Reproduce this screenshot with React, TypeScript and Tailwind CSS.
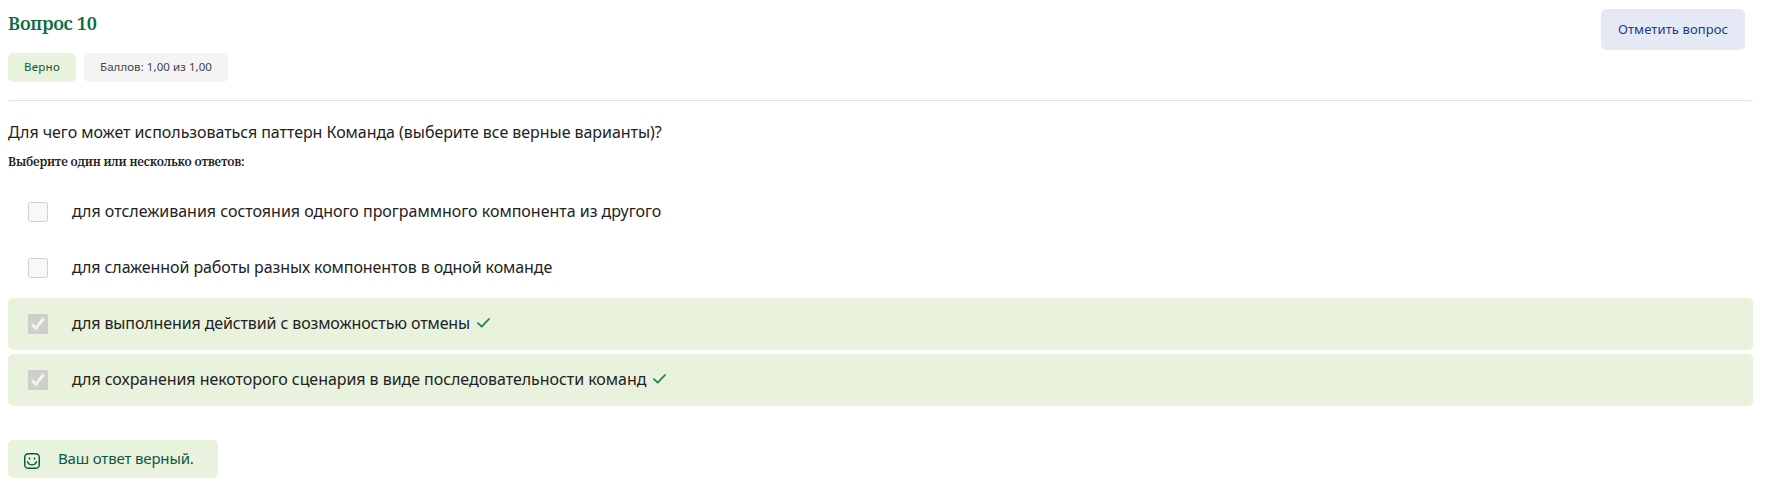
type Answer = { text: string; correct: boolean; tracking: string };

const answers: Answer[] = [
  { text: "для отслеживания состояния одного программного компонента из другого", correct: false, tracking: "tracking-[-0.015px]" },
  { text: "для слаженной работы разных компонентов в одной команде", correct: false, tracking: "tracking-[-0.09px]" },
  { text: "для выполнения действий с возможностью отмены", correct: true, tracking: "tracking-[-0.12px]" },
  { text: "для сохранения некоторого сценария в виде последовательности команд", correct: true, tracking: "tracking-[-0.05px]" },
];

function Checkbox({ checked }: { checked: boolean }) {
  if (!checked) {
    return <span className="mb-px size-5 shrink-0 rounded-[2px] border border-[#d2d2d2] bg-[#f8f8f8]" />;
  }
  return (
    <svg className="size-5 shrink-0" viewBox="0 0 20 20" fill="none">
      <rect width="20" height="20" rx="1" fill="#cdcfca" />
      <path d="M4 10.200 7.900 14.200 15.800 4.200" stroke="#f1f4ee" strokeWidth="3" />
    </svg>
  );
}

function Tick() {
  return (
    <svg className="mb-0.5 ml-[7px] h-[10px] w-[13px] shrink-0" viewBox="0 0 13 10" fill="none">
      <path d="M1 5.2 4.7 8.7 12 1" stroke="#1a8743" strokeWidth="1.8" strokeLinecap="round" strokeLinejoin="round" />
    </svg>
  );
}

function Smile() {
  return (
    <svg className="mt-1 size-4 shrink-0" viewBox="0 0 16 16" fill="none" stroke="#085a40" strokeLinecap="round">
      <rect x="0.75" y="0.75" width="14.5" height="14.5" rx="3.6" strokeWidth="1.5" />
      <path d="M3.4 8.800c1 2.200 2.700 3.100 4.600 3.100s3.600-.9 4.600-3.100" strokeWidth="1.4" />
      <path d="M5.500 5.500h.01M10.500 5.500h.01" strokeWidth="1.8" />
    </svg>
  );
}

export default function App() {
  return (
    <main className="h-[485px] bg-white pl-2 pr-[17px] pt-[9px] font-['Noto_Sans',sans-serif] text-[#222]">
      <header className="flex h-[92px] items-start justify-between border-b border-[#dee2e6] pr-2">
        <div>
          <h1 className="font-['Noto_Serif',serif] text-lg/7 font-semibold tracking-[-0.3px] text-[#0b6b43]">Вопрос 10</h1>
          <div className="mt-4 flex gap-2 text-[11.5px]">
            <span className="flex h-[29px] w-[68px] items-center justify-center rounded-[5px] bg-[#e9f2dc] pb-px tracking-[0.25px] text-[#085a40]">
              Верно
            </span>
            <span className="flex h-[29px] w-36 items-center justify-center rounded-[5px] bg-[#f4f4f4] pb-px tracking-[0.06px] text-[#444]">
              Баллов: 1,00 из 1,00
            </span>
          </div>
        </div>
        <button className="h-[41px] w-36 rounded-[5px] bg-[#e4e9f5] text-[13px] tracking-[0.1px] text-[#1c3a87]">Отметить вопрос</button>
      </header>

      <p className="mt-[19px] text-base/6 tracking-[-0.05px]">Для чего может использоваться паттерн Команда (выберите все верные варианты)?</p>
      <h2 className="mt-2 font-['Noto_Serif',serif] text-xs/5 font-semibold tracking-[-0.2px]">Выберите один или несколько ответов:</h2>

      <div className="mt-[14px] flex flex-col gap-1">
        {answers.map((a) => (
          <div
            key={a.text}
            className={a.correct ? "flex h-[52px] items-center rounded-[5px] bg-[#e9f2dc] pl-5" : "flex h-[52px] items-center pl-5"}
          >
            <Checkbox checked={a.correct} />
            <span className={`ml-6 pb-0.5 text-base/6 ${a.tracking}`}>{a.text}</span>
            {a.correct && <Tick />}
          </div>
        ))}
      </div>

      <div className="mt-[34px] flex h-[38px] w-[210px] items-center rounded-[5px] bg-[#e9f2dc] pl-4 text-[#085a40]">
        <Smile />
        <span className="ml-[18px] pb-0.5 text-[15px] tracking-[-0.16px]">Ваш ответ верный.</span>
      </div>
    </main>
  );
}
